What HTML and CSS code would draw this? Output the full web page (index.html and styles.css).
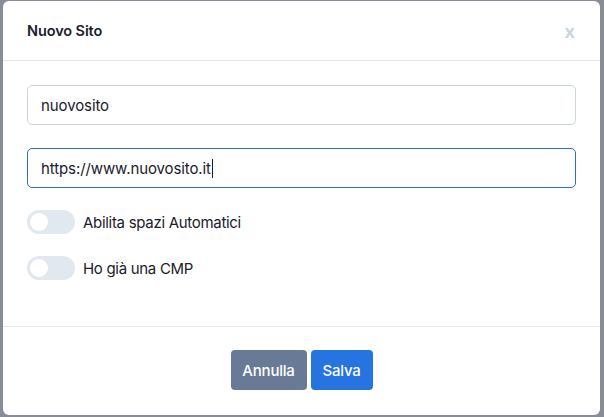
FILE: index.html
```html
<!DOCTYPE html>
<html>
<head>
<meta charset="utf-8">
<link rel="stylesheet" href="styles.css">
</head>
<body>
<div class="modal">
  <div class="header">
    <div class="title">Nuovo Sito</div>
    <div class="close">x</div>
  </div>
  <div class="content">
    <div class="input">nuovosito</div>
    <div class="input focus">https://www.nuovosito.it<span class="caret"></span></div>
    <div class="toggle-row"><span class="toggle"><span class="knob"></span></span><span class="label">Abilita spazi Automatici</span></div>
    <div class="toggle-row"><span class="toggle"><span class="knob"></span></span><span class="label">Ho già una CMP</span></div>
  </div>
  <div class="footer">
    <button class="btn cancel">Annulla</button>
    <button class="btn save">Salva</button>
  </div>
</div>
</body>
</html>
```
FILE: styles.css
```css
* { box-sizing: border-box; }
html, body { margin: 0; height: 100%; }
body {
  background: #878d97;
  padding: 1px 4px 2px 3px;
  font-family: Inter, "Noto Sans", sans-serif;
  color: #1a202c;
}
.modal {
  background: #fff;
  border-radius: 6px;
  height: 414px;
  display: flex;
  flex-direction: column;
}
.header {
  height: 60px;
  border-bottom: 1px solid #e2e8f0;
  display: flex;
  align-items: center;
  justify-content: space-between;
  padding: 0 25px 0 24px;
}
.title { font-size: 14.5px; font-weight: 600; letter-spacing: -0.1px; }
.close { font-size: 18px; font-weight: 700; color: #cbd5e0; margin-top: 2px; }
.content {
  padding: 24px 24px 0 24px;
  height: 266px;
  border-bottom: 1px solid #e2e8f0;
  display: flex;
  flex-direction: column;
}
.input {
  height: 40px;
  border: 1px solid #cbd5e0;
  border-radius: 5px;
  padding: 0 13px;
  display: flex;
  align-items: center;
  font-size: 15px;
  color: #1a202c;
  margin-bottom: 23px;
  letter-spacing: -0.1px;
}
.input.focus { border-color: #2b6cd6; margin-bottom: 22px; }
.caret { display: inline-block; width: 1px; height: 19px; background: #1a202c; margin-left: 1px; }
.toggle-row { display: flex; align-items: center; margin-bottom: 22px; }
.toggle {
  width: 48px; height: 24px; border-radius: 12px;
  background: #e2e8f0;
  display: flex; align-items: center; padding-left: 3px;
}
.knob { width: 18px; height: 18px; border-radius: 50%; background: #fff; }
.label { margin-left: 8px; font-size: 15px; letter-spacing: -0.3px; }
.footer {
  flex: 1;
  display: flex;
  justify-content: center;
  align-items: center;
  gap: 4px;
  padding-bottom: 2px;
}
.btn {
  height: 40px;
  border: none;
  border-radius: 4px;
  color: #fff;
  font-family: inherit;
  font-size: 15px;
  font-weight: 500;
  padding: 0 10px;
  letter-spacing: -0.2px;
}
.cancel { background: #687a96; width: 76px; }
.save { background: #2574e0; width: 62px; }
```
